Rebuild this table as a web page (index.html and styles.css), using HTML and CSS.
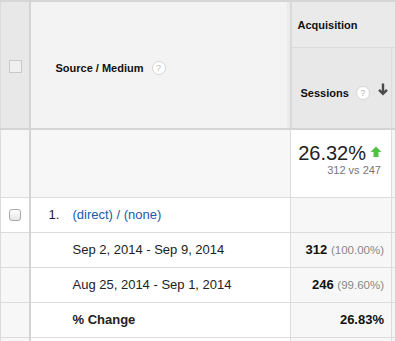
FILE: index.html
```html
<!DOCTYPE html>
<html>
<head>
<meta charset="utf-8">
<link rel="stylesheet" href="styles.css">
</head>
<body>
<table class="report">
  <colgroup>
    <col class="c-cb"><col class="c-src"><col class="c-sess"><col class="c-extra">
  </colgroup>
  <tr class="h1">
    <td class="cb head-cb" rowspan="2"><span class="box"></span></td>
    <th class="src-head" rowspan="2"><span class="lbl">Source / Medium</span><span class="help">?</span></th>
    <th class="acq" colspan="2">Acquisition</th>
  </tr>
  <tr class="h2">
    <th class="sess-head"><span class="lbl">Sessions</span><span class="help">?</span><svg class="down" width="10" height="13" viewBox="0 0 10 13"><path d="M5 0.5v10.5M1 6.8L5 10.8 9 6.8" fill="none" stroke="#4a4a4a" stroke-width="2.4"/></svg></th>
    <td class="extra-h"></td>
  </tr>
  <tr class="sum">
    <td class="cb gray"></td>
    <td class="gray"></td>
    <td class="sum-val">
      <div class="big">26.32%<svg class="up" width="12" height="12" viewBox="0 0 12 12"><path d="M6 0.5L11.5 6H8.5V11H3.5V6H0.5Z" fill="#4fc340"/></svg></div>
      <div class="vs">312 vs 247</div>
    </td>
    <td class="extra"></td>
  </tr>
  <tr class="r">
    <td class="cb"><span class="box rnd"></span></td>
    <td class="name"><span class="idx">1.</span><a class="link">(direct) / (none)</a></td>
    <td class="num gray"></td>
    <td class="extra"></td>
  </tr>
  <tr class="r">
    <td class="cb gray"></td>
    <td class="name"><span class="idx"></span>Sep 2, 2014 - Sep 9, 2014</td>
    <td class="num gray"><b>312</b> <span class="pct">(100.00%)</span></td>
    <td class="extra"></td>
  </tr>
  <tr class="r">
    <td class="cb gray"></td>
    <td class="name"><span class="idx"></span>Aug 25, 2014 - Sep 1, 2014</td>
    <td class="num gray"><b>246</b> <span class="pct">(99.60%)</span></td>
    <td class="extra"></td>
  </tr>
  <tr class="r">
    <td class="cb gray"></td>
    <td class="name bold"><span class="idx"></span>% Change</td>
    <td class="num gray"><b>26.83%</b></td>
    <td class="extra"></td>
  </tr>
  <tr class="tail">
    <td class="cb gray"></td><td></td><td class="gray"></td><td class="extra"></td>
  </tr>
</table>
</body>
</html>
```

FILE: styles.css
```css
html, body {
  margin: 0;
  padding: 0;
  background: #fff;
}
body {
  font-family: "Liberation Sans", Arial, sans-serif;
  color: #222;
  overflow: hidden;
}
.report {
  border-collapse: collapse;
  table-layout: fixed;
  width: 396px;
  border-top: 2px solid #d6d6d6;
}
.c-cb { width: 29px; }
.c-src { width: 261px; }
.c-sess { width: 101px; }
.c-extra { width: 5px; }
td, th {
  border: 1px solid #dcdcdc;
  padding: 0;
  font-weight: normal;
  text-align: left;
  vertical-align: middle;
}
.h1 { height: 46px; }
.h2 { height: 82px; }
.sum { height: 68px; }
.r { height: 35px; }
.tail { height: 20px; }

.head-cb { background: #e8e8e8; border-right: 2px solid #d4d4d4; border-bottom: 2px solid #d4d4d4; padding-top: 4px; }
.cb { text-align: center; border-right: 2px solid #d4d4d4; }
.box {
  display: inline-block;
  width: 11px;
  height: 11px;
  border: 1px solid #c9c9c9;
  background: #f0f0f0;
  vertical-align: middle;
  margin-left: 1px;
  margin-top: -2px;
}
.box.rnd {
  border-radius: 3px;
  border-color: #a9a9a9;
  background: linear-gradient(#ffffff, #e6e6e6);
  width: 10px;
  height: 10px;
  margin-left: 0;
  margin-top: 0;
}
.src-head {
  background: #f3f3f3;
  padding-left: 25px;
  padding-top: 4px;
  border-bottom: 2px solid #d4d4d4;
  border-right: 2px solid #d9d9d9;
  box-shadow: inset -3px 0 0 #ebebeb;
}
.lbl {
  font-size: 11px;
  font-weight: bold;
  color: #111;
  vertical-align: middle;
}
.help {
  display: inline-block;
  width: 12px;
  height: 12px;
  border: 1px solid #d6d6d6;
  border-radius: 50%;
  background: #fff;
  color: #b8b8b8;
  font-size: 9px;
  line-height: 12px;
  text-align: center;
  margin-left: 8px;
  vertical-align: middle;
}
.acq {
  background: #eaeaea;
  font-size: 11px;
  font-weight: bold;
  color: #111;
  padding-left: 6px;
  padding-top: 2px;
}
.sess-head {
  background: #e8e8e8;
  padding-left: 9px;
  padding-top: 8px;
  white-space: nowrap;
  border-bottom: 2px solid #d4d4d4;
}
.sess-head .help { margin-left: 7px; }
.down { vertical-align: middle; margin-left: 8px; margin-top: -6px; }
.extra-h { background: #e8e8e8; border-bottom: 2px solid #d4d4d4; }
.extra { background: #f5f5f5; }
.gray { background: #f7f7f7; }
.sum-val {
  background: #fff;
  text-align: right;
  padding-right: 9px;
  vertical-align: top;
  padding-top: 12px;
}
.big {
  font-size: 20px;
  color: #222;
  line-height: 22px;
  white-space: nowrap;
}
.up { margin-left: 4px; vertical-align: 2px; }
.vs {
  font-size: 11px;
  color: #777;
  margin-top: 0;
  padding-right: 1px;
}
.name {
  font-size: 13px;
  color: #222;
  white-space: nowrap;
}
.name.bold { font-weight: bold; }
.idx {
  display: inline-block;
  width: 24px;
  padding-left: 18px;
}
.link { color: #1b5aa6; }
.num {
  text-align: right;
  padding-right: 7px;
  font-size: 13px;
  white-space: nowrap;
}
.num b { color: #111; }
.pct { color: #888; font-size: 11.5px; }
```
